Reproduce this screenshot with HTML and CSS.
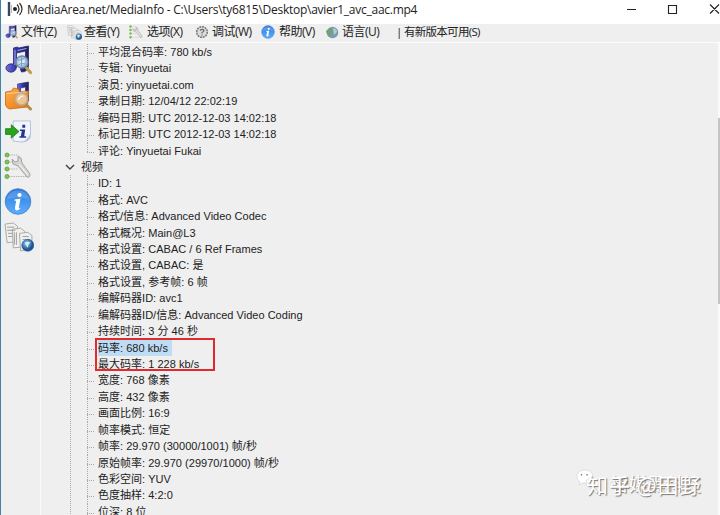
FILE: index.html
```html
<!DOCTYPE html>
<html lang="zh-CN">
<head>
<meta charset="utf-8">
<title>MediaInfo</title>
<link rel="stylesheet" href="styles.css">
</head>
<body>
<svg class="defs" width="0" height="0">
  <defs>
    <linearGradient id="gb" x1="0" y1="0" x2="0" y2="1"><stop offset="0" stop-color="#2c78dc"/><stop offset="1" stop-color="#5cb0ff"/></linearGradient>
    <linearGradient id="go" x1="0" y1="0" x2="1" y2="1"><stop offset="0" stop-color="#ffb04c"/><stop offset="1" stop-color="#e5750f"/></linearGradient>
    <linearGradient id="gn" x1="0" y1="0" x2="1" y2="0"><stop offset="0" stop-color="#6d70e0"/><stop offset=".45" stop-color="#3434a4"/><stop offset="1" stop-color="#20204f"/></linearGradient>
    <radialGradient id="gl"><stop offset="0" stop-color="#eef7fd"/><stop offset="1" stop-color="#8fb6da"/></radialGradient>
    <radialGradient id="gg" cx=".4" cy=".35"><stop offset="0" stop-color="#9fd0e8"/><stop offset="1" stop-color="#1b5596"/></radialGradient>
    <symbol id="note" viewBox="0 0 28 30">
      <path fill-rule="evenodd" d="M9 3 13 2 14 3 24 1V20Q24 27 17 27Q15 24 17 21Q19 19 21 19V6L12 8V22Q11 28 5 27Q0 25 2 21Q4 18 9 19Z" fill="url(#gn)" stroke="#24246e" stroke-width=".8"/>
      <path d="M10.500 5V20M13 5.500 22 3.500" fill="none" stroke="#a8abf0"/>
      <path d="m22 23 4 4.500" stroke="#c39a4e" stroke-width="3.200" stroke-linecap="round"/>
      <circle cx="17.500" cy="17" r="6" fill="url(#gl)" fill-opacity=".9" stroke="#7088a8" stroke-width="1.300"/>
      <path d="M13 15q4 1 7-2M14 20q3-3 7-1M17 12v9" fill="none" stroke="#6f96c2" stroke-width=".9"/>
    </symbol>
    <symbol id="folder" viewBox="0 0 28 30">
      <path d="M13 3 24 1V20H21V6L16 7V14H13Z" fill="url(#gn)" stroke="#24246e" stroke-width=".6"/>
      <path d="M1 11 7 10 9 7 14 8 15 11 24 10 23 26 5 28Q2 27 1 24Z" fill="url(#go)" stroke="#c66a14" stroke-width=".8"/>
      <path d="M2 12.500 22 11" stroke="#ffd196" fill="none"/>
      <path d="m21 23 5 5" stroke="#b98b42" stroke-width="3" stroke-linecap="round"/>
      <circle cx="17" cy="18" r="6" fill="#eed3ad" fill-opacity=".8" stroke="#b7aca0" stroke-width="1.500"/>
      <path d="M14 19q1-4 5-4" stroke="#fff" fill="none" stroke-width="1.200"/>
    </symbol>
    <symbol id="export" viewBox="0 0 28 24">
      <path d="M9 1H27V16Q26 22 19 23L9 22Z" fill="#f2f5fd" stroke="#b6c0dc"/>
      <path d="M27 14Q23 22 18 23Q25 23 27 18Z" fill="#b0bddf"/>
      <path d="M18.500 5h3v3h-3zM16 10H21.500L20.500 17H22.500V18.500H15.500V17H17L18 11.500H16Z" fill="#26348f"/>
      <path d="M1 9H7V5L15 12 7 19V15H1Z" fill="#27a51d" stroke="#14780e" stroke-width=".8"/>
    </symbol>
    <symbol id="options" viewBox="0 0 28 28">
      <path d="M5 3h9M5 10h4M5 17h9M5 24.500h19" stroke="#b8b8b8" stroke-dasharray="1.500 .8"/>
      <g fill="#7cc855" stroke="#559c33" stroke-width=".8"><circle cx="3" cy="3" r="2"/><circle cx="3" cy="10" r="2"/><circle cx="3" cy="17" r="2"/><circle cx="3" cy="24.500" r="2"/></g>
      <path d="M8 7 9 12 14 14 23 25Q26 26 26 22L18 11 17 6 14 4 14 9 11 10Z" fill="#d5d5d2" stroke="#9b9b99" stroke-width=".9"/>
      <path d="m15 12 9 11" stroke="#f8f8f8"/>
    </symbol>
    <symbol id="info" viewBox="0 0 28 28">
      <circle cx="14" cy="14" r="12.800" fill="url(#gb)" stroke="#3f7cc8" stroke-width=".8"/>
      <path d="M3 12Q5 3 14 3T25 12Q14 8 3 12" fill="#fff" opacity=".16"/>
      <circle cx="15.500" cy="7.500" r="2.100" fill="#fff"/>
      <path d="M10.500 12Q14 11.500 16.500 11L14.800 20Q14.800 21.500 17 20Q14.500 23.500 12 22.800Q10.500 22 11 20L12.200 13.300H10.500Z" fill="#fff"/>
    </symbol>
    <symbol id="pages" viewBox="0 0 29 29">
      <g fill="#f0f0ee" stroke="#a6a6a4" stroke-width=".9"><path d="M1 2 9 1 13 4V19L3 20Z"/><path d="M8 7 16 6 20 9V24L9 25Z"/><path d="M15 11 23 10 27 13V26L16 28Z"/></g>
      <path d="M3 5h7M3 8h8M4 11h4M4 14h4M10 10v12M12 10v12M18 14h6M18 17h7" stroke="#999" stroke-width=".9"/>
      <circle cx="23" cy="22.500" r="5.800" fill="url(#gg)" stroke="#245a96" stroke-width=".6"/>
      <path d="M20 20q3-2 6 0l-2 1-1 4-2-3z" fill="#d6ecf4"/>
    </symbol>
  </defs>
</svg>
<div class="window">
  <header class="titlebar">
    <svg class="logo" width="18" height="16" viewBox="0 0 18 16"><path d="M2 1v14" stroke="#3a4660" stroke-width="2.400"/><path d="M4.500 4v8" stroke="#b8bcc4"/><circle cx="8" cy="8" r="2" fill="#222"/><path d="M10 3.500q4 4.500 0 9M12.500 2q5 6 0 12" fill="none" stroke="#333" stroke-width="1.200"/></svg>
    <span class="title">MediaArea.net/MediaInfo - C:\Users\ty6815\Desktop\avier1_avc_aac.mp4</span>
    <svg class="controls" width="100" height="18" viewBox="0 0 100 18"><path d="M7 9.500h9M48.500 5.500h8v8h-8zM90 4.500l9 9M99 4.500l-9 9" fill="none" stroke="#222" stroke-width="1.100"/></svg>
  </header>
  <nav class="menubar">
    <span class="item file"><svg width="13" height="14"><use href="#note"/></svg>文件(Z)</span>
    <span class="item view"><svg width="15" height="15"><use href="#pages"/></svg>查看(Y)</span>
    <span class="item opts"><svg width="14" height="14"><use href="#options"/></svg>选项(X)</span>
    <span class="item debug"><svg width="14" height="14" viewBox="0 0 14 14"><circle cx="7" cy="7" r="5.300" fill="#ddd" stroke="#777" stroke-width="1.500" stroke-dasharray="2 .7"/><path d="M5 5.500Q7 3.500 9 5.200Q9 6.500 7 7.500V8.500M7 9.500v1" fill="none" stroke="#666" stroke-width="1.200"/></svg>调试(W)</span>
    <span class="item help"><svg width="14" height="14"><use href="#info"/></svg>帮助(V)</span>
    <span class="item lang"><svg width="14" height="14" viewBox="0 0 14 14"><circle cx="7.500" cy="7.500" r="5.800" fill="#799bb1"/><path d="M1 6 5 3 8 5 7 9 4 12 2 9Z" fill="#71a271"/><path d="M8 3q4 1 4 4l-3 3z" fill="#b4ccd8"/></svg>语言(U)</span>
    <span class="item update">| 有新版本可用(S)</span>
  </nav>
  <div class="body">
    <aside class="toolbar">
      <svg width="29" height="30"><use href="#note"/></svg>
      <svg class="t2" width="29" height="30"><use href="#folder"/></svg>
      <svg class="t3" width="28" height="23"><use href="#export"/></svg>
      <svg class="t4" width="28" height="28"><use href="#options"/></svg>
      <svg class="t5" width="28" height="29"><use href="#info"/></svg>
      <svg class="t6" width="30" height="30"><use href="#pages"/></svg>
    </aside>
    <main class="tree">
      <ul class="group general">
        <li>平均混合码率: 780 kb/s</li>
        <li>专辑: Yinyuetai</li>
        <li>演员: yinyuetai.com</li>
        <li>录制日期: 12/04/12 22:02:19</li>
        <li>编码日期: UTC 2012-12-03 14:02:18</li>
        <li>标记日期: UTC 2012-12-03 14:02:18</li>
        <li class="last">评论: Yinyuetai Fukai</li>
      </ul>
      <div class="branch"><svg width="10" height="7" viewBox="0 0 10 7"><path d="m1 1 4 4 4-4" fill="none" stroke="#404040" stroke-width="1.400"/></svg><span>视频</span></div>
      <ul class="group">
        <li>ID: 1</li>
        <li>格式: AVC</li>
        <li>格式/信息: Advanced Video Codec</li>
        <li>格式概况: Main@L3</li>
        <li>格式设置: CABAC / 6 Ref Frames</li>
        <li>格式设置, CABAC: 是</li>
        <li>格式设置, 参考帧: 6 帧</li>
        <li>编解码器ID: avc1</li>
        <li>编解码器ID/信息: Advanced Video Coding</li>
        <li>持续时间: 3 分 46 秒</li>
        <li class="marked"><span class="selected">码率: 680 kb/s</span></li>
        <li>最大码率: 1 228 kb/s</li>
        <li>宽度: 768 像素</li>
        <li>高度: 432 像素</li>
        <li>画面比例: 16:9</li>
        <li>帧率模式: 恒定</li>
        <li>帧率: 29.970 (30000/1001) 帧/秒</li>
        <li>原始帧率: 29.970 (29970/1000) 帧/秒</li>
        <li>色彩空间: YUV</li>
        <li>色度抽样: 4:2:0</li>
        <li>位深: 8 位</li>
      </ul>
    </main>
    <div class="scroll"></div>
  </div>
  <div class="watermark">
    <svg width="24" height="22" viewBox="0 0 24 22"><path d="M9 1C3 1 0 5 1 9q1 3 3 4l-1 3 4-2q8 1 10-5 0-8-8-8M16 9q-6 0-6 5t6 5l4 2v-3q3-2 2-5t-6-4" fill="#fff" stroke="#ccc" stroke-width=".6"/><path d="M5.500 5v1.500M11 5v1.500" stroke="#777" stroke-width="1.300"/></svg>
    <span class="under">智媒黑科技</span>
    <span class="over">知乎 @田野</span>
  </div>
</div>
</body>
</html>
```
FILE: styles.css
```css
*, *::after { box-sizing: border-box; }
body { margin: 0; background: #efefef; color: #222; }
.defs { position: absolute; }
svg { display: block; flex: none; }
.window {
  position: relative;
  width: 720px;
  height: 515px;
  overflow: hidden;
  display: flex;
  flex-direction: column;
  border-left: 1px solid #3f86a8;
}
.titlebar {
  height: 24px;
  flex: none;
  display: flex;
  align-items: flex-start;
  background: #fff;
}
.logo { margin: 1px 1px 0 6px; }
.title {
  width: 396px;
  margin: 0 0 0 1px;
  white-space: nowrap;
  font: 12px/19px "Open Sans", "Noto Sans", sans-serif;
  letter-spacing: -0.26px;
}
.controls { margin-left: auto; margin-right: 0; }
.menubar {
  height: 19px;
  flex: none;
  display: flex;
  align-items: center;
  padding: 0 0 2px 4px;
  border-bottom: 1px solid #fbfbfb;
  font: 12px/16px "Open Sans", "Noto Sans CJK SC", sans-serif;
  letter-spacing: -0.5px;
}
.item { display: flex; align-items: center; gap: 3px; white-space: nowrap; flex: none; }
.file { width: 62px; }
.view { width: 62px; gap: 2px; }
.opts { width: 66px; gap: 4px; }
.debug { width: 66px; }
.help { width: 64px; gap: 4px; }
.lang { width: 71px; gap: 3px; }
.update { font-size: 11.5px; letter-spacing: -0.7px; padding-bottom: 1px; }
.body { flex: 1; display: flex; min-height: 0; }
.toolbar { width: 40px; flex: none; padding: 2px 0 0 4px; border-right: 1px solid #fafafa; }
.toolbar svg { margin-left: -1px; }
.t2 { margin-top: 6px; }
.t3 { margin-top: 9px; }
.t4 { margin-top: 9px; }
.t5 { margin-top: 7px; }
.t6 { margin-top: 6px; }
.tree {
  flex: 1;
  min-width: 0;
  overflow: hidden;
  padding: 1px 0 0 29px;
  font: 11px/16.43px "Liberation Sans", "Noto Sans CJK SC", sans-serif;
  letter-spacing: 0.02px;
}
.group {
  list-style: none;
  margin: 0;
  padding: 0 0 0 17px;
  background: repeating-linear-gradient(#a8a8a8 0 1px, transparent 1px 2px) 0 0 / 1px 100% no-repeat;
}
.group li {
  position: relative;
  height: 16.43px;
  padding-left: 11px;
  white-space: nowrap;
  background:
    repeating-linear-gradient(#a8a8a8 0 1px, transparent 1px 2px) 0 0 / 1px 100% no-repeat,
    repeating-linear-gradient(90deg, #a8a8a8 0 1px, transparent 1px 2px) 0 9px / 8px 1px no-repeat;
}
.group li.last { background-size: 1px 10px, 8px 1px; }
.branch { height: 16.43px; display: flex; align-items: center; }
.branch svg { margin-left: -5px; margin-right: 6px; }
.selected { display: inline-block; height: 16px; padding-right: 4px; background: #bfdcf5; }
.marked::after {
  content: "";
  position: absolute;
  z-index: 1;
  left: 8px;
  top: -2px;
  width: 120px;
  height: 33px;
  border: 2px solid #e02a2e;
}
.scroll { width: 2px; flex: none; background: linear-gradient(#fafafa 0 75px, #c4c4c4 75px 261px, #fafafa 261px); }
.watermark {
  position: absolute;
  left: 575px;
  top: 469px;
  width: 130px;
  height: 30px;
  font-family: "Noto Sans CJK SC", sans-serif;
  white-space: nowrap;
  color: #fff;
  text-shadow: 1px 1px 1px #777;
}
.under { position: absolute; left: 35px; top: 1px; font-size: 18px; line-height: 26px; }
.over { position: absolute; left: 11px; top: 1px; font-size: 21px; line-height: 28px; letter-spacing: 1px; }
```
